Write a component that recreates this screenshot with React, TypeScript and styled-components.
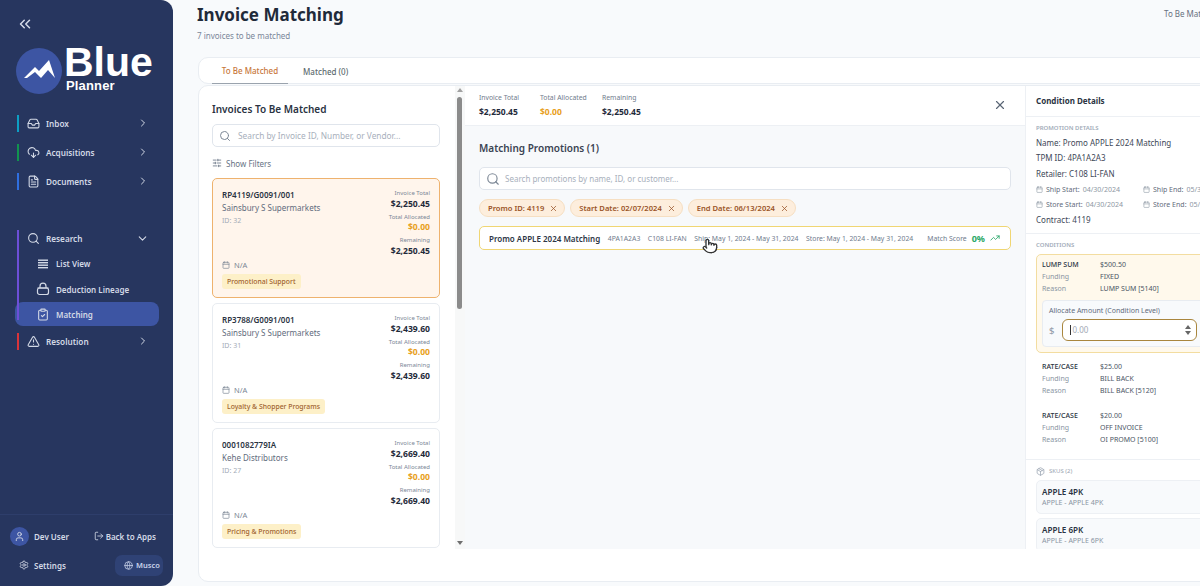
import React from 'react';
import styled, { createGlobalStyle } from 'styled-components';
import {
  Calendar,
  ChevronDown,
  ChevronRight,
  ChevronsLeft,
  ClipboardCheck,
  CloudDownload,
  FileText,
  Globe,
  Inbox,
  LogOut,
  Package,
  Pointer,
  Search,
  Settings,
  SlidersHorizontal,
  TrendingUp,
  TriangleAlert,
  User,
  X,
} from 'lucide-react';

const GlobalStyle = createGlobalStyle`
  html, body {
    margin: 0;
    padding: 0;
    width: 1200px;
    height: 586px;
    overflow: hidden;
    background: #f8fafc;
    font-family: "Noto Sans", "Open Sans", sans-serif;
  }
  * { box-sizing: border-box; }
`;

const invoices = [
  { no: 'RP4119/G0091/001', vendor: 'Sainsbury S Supermarkets', id: 32, total: '$2,250.45', tag: 'Promotional Support', active: true },
  { no: 'RP3788/G0091/001', vendor: 'Sainsbury S Supermarkets', id: 31, total: '$2,439.60', tag: 'Loyalty & Shopper Programs', active: false },
  { no: '0001082779IA', vendor: 'Kehe Distributors', id: 27, total: '$2,669.40', tag: 'Pricing & Promotions', active: false },
];

const App: React.FC = () => {
  return (
    <Page>
      <GlobalStyle />
      <Sidebar>
        <Collapse>
          <ChevronsLeft size={18} />
        </Collapse>
        <Logo>
          <LogoMark>
            <svg width="46" height="46" viewBox="0 0 46 46">
              <path d="M8 30 L19 19 L23 23 L33 12 L39 30 L32 22 L25 30 L19 24 L11 30 Z" fill="#fff" />
            </svg>
          </LogoMark>
          <LogoText>
            <LogoBig>Blue</LogoBig>
            <LogoSmall>Planner</LogoSmall>
          </LogoText>
        </Logo>
        <NavGroup>
          <NavRow>
            <Accent $color="#0d9fc4" />
            <Inbox size={13} />
            <NavLabel>Inbox</NavLabel>
            <ChevronRight size={12} />
          </NavRow>
          <NavRow>
            <Accent $color="#11934f" />
            <CloudDownload size={13} />
            <NavLabel>Acquisitions</NavLabel>
            <ChevronRight size={12} />
          </NavRow>
          <NavRow>
            <Accent $color="#2f6fe0" />
            <FileText size={13} />
            <NavLabel>Documents</NavLabel>
            <ChevronRight size={12} />
          </NavRow>
        </NavGroup>
        <ResearchGroup>
          <ResearchBar />
          <ResearchRow>
            <Search size={13} />
            <NavLabel>Research</NavLabel>
            <ChevronDown size={13} />
          </ResearchRow>
          <SubRow>
            <svg width="14" height="10" viewBox="0 0 14 10" fill="currentColor">
              <rect x="2" y="0.5" width="10" height="1.4" />
              <rect x="2" y="3" width="10" height="1.4" />
              <rect x="2" y="5.5" width="10" height="1.4" />
              <rect x="2" y="8" width="10" height="1.4" />
            </svg>
            <span>List View</span>
          </SubRow>
          <SubRow>
            <svg width="14" height="14" viewBox="0 0 14 14" fill="none" stroke="currentColor" strokeWidth="1.2">
              <path d="M4 6V4.2a3 3 0 0 1 6 0V6" />
              <path d="M1.5 6h11" />
              <rect x="1.5" y="6" width="11" height="6.5" rx="2" />
            </svg>
            <span>Deduction Lineage</span>
          </SubRow>
          <SubRow $active>
            <ClipboardCheck size={13} />
            <span>Matching</span>
          </SubRow>
        </ResearchGroup>
        <ResolutionRow>
          <Accent $color="#d9343a" />
          <TriangleAlert size={13} />
          <NavLabel>Resolution</NavLabel>
          <ChevronRight size={12} />
        </ResolutionRow>
        <SideFooter>
          <FooterRow>
            <UserBlock>
              <Avatar>
                <User size={11} />
              </Avatar>
              Dev User
            </UserBlock>
            <FooterLink>
              <LogOut size={10} />
              Back to Apps
            </FooterLink>
          </FooterRow>
          <FooterRow>
            <SettingsBlock>
              <Settings size={10} />
              Settings
            </SettingsBlock>
            <OrgPill>
              <Globe size={9} />
              Musco
            </OrgPill>
          </FooterRow>
        </SideFooter>
      </Sidebar>

      <Main>
        <Header>
          <div>
            <Title>Invoice Matching</Title>
            <Subtitle>7 invoices to be matched</Subtitle>
          </div>
          <Crumb>To Be Matched</Crumb>
        </Header>

        <Tabs>
          <Tab $active>To Be Matched</Tab>
          <Tab>Matched (0)</Tab>
        </Tabs>

        <Board>
          <Columns>
            <ListColumn>
              <ListBody>
                <ListTitle>Invoices To Be Matched</ListTitle>
                <SearchBox>
                  <Search size={12} />
                  <span>Search by Invoice ID, Number, or Vendor...</span>
                </SearchBox>
                <FilterToggle>
                  <SlidersHorizontal size={10} />
                  Show Filters
                </FilterToggle>
                <CardStack>
                  {invoices.map((inv) => (
                    <InvoiceCard key={inv.no} $active={inv.active}>
                      <CardTop>
                        <div>
                          <InvoiceNo>{inv.no}</InvoiceNo>
                          <Vendor>{inv.vendor}</Vendor>
                          <InvoiceId>ID: {inv.id}</InvoiceId>
                        </div>
                        <Amounts>
                          <AmountLabel>Invoice Total</AmountLabel>
                          <AmountValue>{inv.total}</AmountValue>
                          <AmountLabel>Total Allocated</AmountLabel>
                          <AmountValue $orange>$0.00</AmountValue>
                          <AmountLabel>Remaining</AmountLabel>
                          <AmountValue>{inv.total}</AmountValue>
                        </Amounts>
                      </CardTop>
                      <DateLine>
                        <Calendar size={8} />
                        N/A
                      </DateLine>
                      <Tag>{inv.tag}</Tag>
                    </InvoiceCard>
                  ))}
                </CardStack>
              </ListBody>
              <Scrollbar>
                <ArrowUp />
                <Thumb />
                <ArrowDown />
              </Scrollbar>
            </ListColumn>

            <MiddleColumn>
              <Totals>
                <TotalsGroup>
                  <div>
                    <TotalLabel>Invoice Total</TotalLabel>
                    <TotalValue>$2,250.45</TotalValue>
                  </div>
                  <div>
                    <TotalLabel>Total Allocated</TotalLabel>
                    <TotalValue $orange>$0.00</TotalValue>
                  </div>
                  <div>
                    <TotalLabel>Remaining</TotalLabel>
                    <TotalValue>$2,250.45</TotalValue>
                  </div>
                </TotalsGroup>
                <CloseButton>
                  <X size={14} />
                </CloseButton>
              </Totals>
              <MiddleBody>
                <SectionTitle>Matching Promotions (1)</SectionTitle>
                <PromoSearch>
                  <Search size={14} />
                  <span>Search promotions by name, ID, or customer...</span>
                </PromoSearch>
                <Chips>
                  <Chip>
                    Promo ID: 4119 <X size={9} />
                  </Chip>
                  <Chip>
                    Start Date: 02/07/2024 <X size={9} />
                  </Chip>
                  <Chip>
                    End Date: 06/13/2024 <X size={9} />
                  </Chip>
                </Chips>
                <PromoRow>
                  <PromoName>Promo APPLE 2024 Matching</PromoName>
                  <PromoMeta>4PA1A2A3</PromoMeta>
                  <PromoMeta>C108 LI-FAN</PromoMeta>
                  <PromoMeta>Ship: May 1, 2024 - May 31, 2024</PromoMeta>
                  <PromoMeta>Store: May 1, 2024 - May 31, 2024</PromoMeta>
                  <Score>
                    <PromoMeta>Match Score</PromoMeta>
                    <ScoreValue>0%</ScoreValue>
                    <TrendingUp size={10} color="#22a565" />
                  </Score>
                  <Cursor>
                    <Pointer size={16} fill="#fff" />
                  </Cursor>
                </PromoRow>
              </MiddleBody>
            </MiddleColumn>

            <DetailColumn>
              <DetailHeader>Condition Details</DetailHeader>
              <DetailSection>
                <Eyebrow>PROMOTION DETAILS</Eyebrow>
                <DetailLine>Name: Promo APPLE 2024 Matching</DetailLine>
                <DetailLine>TPM ID: 4PA1A2A3</DetailLine>
                <DetailLine>Retailer: C108 LI-FAN</DetailLine>
                <DatesGrid>
                  <DateCell>
                    <Calendar size={7} />
                    <b>Ship Start:</b> 04/30/2024
                  </DateCell>
                  <DateCell>
                    <Calendar size={7} />
                    <b>Ship End:</b> 05/31/2024
                  </DateCell>
                  <DateCell>
                    <Calendar size={7} />
                    <b>Store Start:</b> 04/30/2024
                  </DateCell>
                  <DateCell>
                    <Calendar size={7} />
                    <b>Store End:</b> 05/31/2024
                  </DateCell>
                </DatesGrid>
                <DetailLine>Contract: 4119</DetailLine>
              </DetailSection>
              <ConditionSection>
                <Eyebrow>CONDITIONS</Eyebrow>
                <ConditionCard $active>
                  <TermGrid>
                    <TermHead>LUMP SUM</TermHead>
                    <TermValue>$500.50</TermValue>
                    <TermKey>Funding</TermKey>
                    <TermValue>FIXED</TermValue>
                    <TermKey>Reason</TermKey>
                    <TermValue>LUMP SUM [5140]</TermValue>
                  </TermGrid>
                  <AllocateBox>
                    <AllocateLabel>Allocate Amount (Condition Level)</AllocateLabel>
                    <AllocateRow>
                      <Dollar>$</Dollar>
                      <AmountInput>
                        <Placeholder>0.00</Placeholder>
                        <Stepper>
                          <StepUp />
                          <StepDown />
                        </Stepper>
                      </AmountInput>
                    </AllocateRow>
                  </AllocateBox>
                </ConditionCard>
                <ConditionCard>
                  <TermGrid>
                    <TermHead>RATE/CASE</TermHead>
                    <TermValue>$25.00</TermValue>
                    <TermKey>Funding</TermKey>
                    <TermValue>BILL BACK</TermValue>
                    <TermKey>Reason</TermKey>
                    <TermValue>BILL BACK [5120]</TermValue>
                  </TermGrid>
                </ConditionCard>
                <ConditionCard>
                  <TermGrid>
                    <TermHead>RATE/CASE</TermHead>
                    <TermValue>$20.00</TermValue>
                    <TermKey>Funding</TermKey>
                    <TermValue>OFF INVOICE</TermValue>
                    <TermKey>Reason</TermKey>
                    <TermValue>OI PROMO [5100]</TermValue>
                  </TermGrid>
                </ConditionCard>
              </ConditionSection>
              <SkuSection>
                <SkuLabel>
                  <Package size={9} />
                  SKUS (2)
                </SkuLabel>
                <SkuCard>
                  <SkuName>APPLE 4PK</SkuName>
                  <SkuSub>APPLE - APPLE 4PK</SkuSub>
                </SkuCard>
                <SkuCard>
                  <SkuName>APPLE 6PK</SkuName>
                  <SkuSub>APPLE - APPLE 6PK</SkuSub>
                </SkuCard>
              </SkuSection>
            </DetailColumn>
          </Columns>
        </Board>
      </Main>
    </Page>
  );
};

export default App;

const Page = styled.div`
  display: flex;
  width: 1200px;
  height: 586px;
  overflow: hidden;
  background: #f8fafc;
`;

/* sidebar */
const Sidebar = styled.aside`
  display: flex;
  flex: none;
  flex-direction: column;
  width: 173px;
  height: 586px;
  padding: 15px 0 0 17px;
  border-radius: 0 12px 12px 0;
  background: #27365f;
  color: #d3d9e6;
`;

const Collapse = styled.div`
  display: flex;
  height: 18px;
  margin-left: -1px;
  color: #d5dbe8;
`;

const Logo = styled.div`
  display: flex;
  align-items: flex-start;
  height: 67px;
  margin: 10px 0 0 -1px;
`;

const LogoMark = styled.div`
  display: flex;
  flex: none;
  width: 46px;
  height: 46px;
  margin-top: 5px;
  border-radius: 50%;
  background: #3d55a3;
`;

const LogoText = styled.div`
  display: flex;
  flex-direction: column;
  margin-left: 2px;
  color: #fff;
  font-family: "Liberation Sans", Arial, sans-serif;
`;

const LogoBig = styled.div`
  margin-top: 1px;
  font-size: 41px;
  font-weight: 700;
  line-height: 36px;
`;

const LogoSmall = styled.div`
  margin: -1px 0 0 2px;
  font-size: 13px;
  font-weight: 700;
  line-height: 14px;
  letter-spacing: 0.15px;
`;

const NavGroup = styled.div`
  display: flex;
  flex-direction: column;
  gap: 5px;
  margin-top: 1px;
`;

const NavRow = styled.div`
  display: flex;
  align-items: center;
  width: 132px;
  height: 24px;
  svg:first-of-type {
    margin-left: 8px;
  }
`;

const ResolutionRow = styled(NavRow)`
  margin-top: 3px;
`;

const Accent = styled.span<{ $color: string }>`
  flex: none;
  width: 2px;
  height: 17px;
  background: ${(p) => p.$color};
`;

const NavLabel = styled.span`
  flex: 1;
  margin-left: 6px;
  font-size: 8.2px;
  font-weight: 600;
`;

const ResearchGroup = styled.div`
  position: relative;
  display: flex;
  flex-direction: column;
  width: 144px;
  margin: 36px 0 0 -2px;
`;

const ResearchBar = styled.span`
  position: absolute;
  top: 1px;
  left: 2px;
  z-index: 1;
  width: 2px;
  height: 90px;
  background: #6d4fd8;
`;

const ResearchRow = styled.div`
  display: flex;
  align-items: center;
  width: 134px;
  height: 18px;
  margin-bottom: 4px;
  padding-left: 12px;
`;

const SubRow = styled.div<{ $active?: boolean }>`
  display: flex;
  align-items: center;
  gap: 6px;
  height: ${(p) => (p.$active ? '24px' : '25.5px')};
  padding-left: 21px;
  border-radius: 8px;
  background: ${(p) => (p.$active ? '#3d55a3' : 'transparent')};
  font-size: 8px;
  font-weight: 600;
  svg {
    flex: none;
    width: 14px;
  }
`;

const SideFooter = styled.div`
  display: flex;
  flex-direction: column;
  gap: 9px;
  margin: auto 0 0 -17px;
  padding: 11px 10px;
  border-top: 1px solid #2e3e6b;
`;

const FooterRow = styled.div`
  display: flex;
  align-items: center;
  justify-content: space-between;
  height: 20px;
  font-size: 8px;
  font-weight: 600;
`;

const UserBlock = styled.div`
  display: flex;
  align-items: center;
  gap: 5px;
`;

const Avatar = styled.span`
  display: flex;
  align-items: center;
  justify-content: center;
  width: 19px;
  height: 19px;
  border-radius: 50%;
  background: #3d55a3;
`;

const FooterLink = styled.div`
  display: flex;
  align-items: center;
  gap: 2px;
  margin-right: 7px;
`;

const SettingsBlock = styled.div`
  display: flex;
  align-items: center;
  gap: 5px;
  margin-left: 9px;
`;

const OrgPill = styled.div`
  display: flex;
  align-items: center;
  gap: 3px;
  width: 48px;
  height: 21px;
  padding-left: 9px;
  border-radius: 7px;
  background: #2f4275;
  color: #c9d3ea;
  font-size: 7.5px;
`;

/* main area */
const Main = styled.main`
  display: flex;
  flex: none;
  flex-direction: column;
  width: 1040px;
  padding-left: 25px;
`;

const Header = styled.header`
  display: grid;
  grid-template-columns: 967px auto;
  height: 57px;
  margin-left: -1px;
  padding-top: 3px;
`;

const Title = styled.h1`
  margin: 0;
  color: #1f2a3a;
  font-size: 17px;
  font-weight: 700;
  line-height: 24px;
`;

const Subtitle = styled.div`
  margin-top: 3px;
  color: #7a8699;
  font-size: 8px;
`;

const Crumb = styled.div`
  margin-top: 5px;
  color: #67707e;
  font-size: 8px;
  white-space: nowrap;
`;

const Tabs = styled.nav`
  display: flex;
  gap: 15px;
  height: 27px;
  margin-right: -40px;
  padding-left: 13px;
  border: 1px solid #e9edf2;
  border-radius: 10px 0 0 10px;
  background: #fff;
`;

const Tab = styled.div<{ $active?: boolean }>`
  display: flex;
  align-items: center;
  justify-content: center;
  min-width: ${(p) => (p.$active ? '76px' : '45px')};
  height: 26px;
  border-bottom: ${(p) => (p.$active ? '1px solid #9aa3ad' : '0')};
  color: ${(p) => (p.$active ? '#c8783c' : '#5d6b6f')};
  font-size: 8px;
  font-weight: 500;
`;

const Board = styled.section`
  height: 497px;
  margin: 1px -40px 0 0;
  border: 1px solid #e9edf2;
  border-radius: 10px 0 0 10px;
  background: #fff;
`;

const Columns = styled.div`
  display: flex;
  height: 463px;
  overflow: hidden;
`;

const ListColumn = styled.div`
  display: flex;
  flex: none;
  width: 266px;
`;

const ListBody = styled.div`
  flex: 1;
  padding: 15px 15px 0 13px;
  overflow: hidden;
`;

const ListTitle = styled.h2`
  margin: 0;
  color: #2a3342;
  font-size: 10px;
  font-weight: 600;
  line-height: 16px;
`;

const SearchBox = styled.div`
  display: flex;
  align-items: center;
  gap: 7px;
  height: 23px;
  margin-top: 7px;
  padding-left: 6px;
  border: 1px solid #e0e5ec;
  border-radius: 5px;
  font-size: 8.3px;
  svg {
    color: #7d8896;
  }
  span {
    color: #a8b0bc;
  }
`;

const FilterToggle = styled.div`
  display: flex;
  align-items: center;
  gap: 4px;
  height: 12px;
  margin-top: 10px;
  color: #687384;
  font-size: 8px;
`;

const CardStack = styled.div`
  display: flex;
  flex-direction: column;
  gap: 5px;
  margin-top: 9px;
`;

const InvoiceCard = styled.article<{ $active: boolean }>`
  display: flex;
  flex-direction: column;
  height: 120px;
  padding: 8px 9px 0 9px;
  border: 1px solid ${(p) => (p.$active ? '#eeb26e' : '#e8ecf1')};
  border-radius: 5px;
  background: ${(p) => (p.$active ? '#fff5ec' : '#fff')};
`;

const CardTop = styled.div`
  display: flex;
  justify-content: space-between;
  height: 72px;
`;

const InvoiceNo = styled.div`
  margin-top: 2px;
  color: #2a3342;
  font-size: 8px;
  font-weight: 600;
  line-height: 12px;
`;

const Vendor = styled.div`
  color: #5f6b7c;
  font-size: 8px;
  line-height: 13px;
`;

const InvoiceId = styled.div`
  margin-top: 1px;
  color: #a3abb7;
  font-size: 7px;
  line-height: 12px;
`;

const Amounts = styled.div`
  display: flex;
  flex-direction: column;
  align-items: flex-end;
  padding-top: 1px;
`;

const AmountLabel = styled.div`
  color: #7b8797;
  font-size: 6px;
  line-height: 11px;
`;

const AmountValue = styled.div<{ $orange?: boolean }>`
  margin: -1.5px 0 1.5px;
  color: ${(p) => (p.$orange ? '#e8a020' : '#1f2a3a')};
  font-size: 8.6px;
  font-weight: 700;
  line-height: 12.5px;
`;

const DateLine = styled.div`
  display: flex;
  align-items: center;
  gap: 4px;
  color: #7a8594;
  font-size: 7.5px;
  line-height: 12px;
`;

const Tag = styled.span`
  align-self: flex-start;
  margin-top: 3px;
  padding: 0 5px;
  border-radius: 3px;
  background: #fdf0c8;
  color: #a0622e;
  font-size: 6.85px;
  font-weight: 500;
  line-height: 15px;
`;

const Scrollbar = styled.div`
  display: flex;
  flex: none;
  flex-direction: column;
  align-items: center;
  width: 10px;
  padding: 2px 1px 0 0;
  background: #f7f8f8;
`;

const ArrowUp = styled.span`
  flex: none;
  width: 0;
  height: 0;
  border-right: 3px solid transparent;
  border-bottom: 4px solid #a1a1a1;
  border-left: 3px solid transparent;
`;

const ArrowDown = styled.span`
  flex: none;
  width: 0;
  height: 0;
  margin-top: auto;
  margin-bottom: 4px;
  border-top: 4px solid #6f6f6f;
  border-right: 3px solid transparent;
  border-left: 3px solid transparent;
`;

const Thumb = styled.span`
  width: 5px;
  height: 212px;
  margin-top: 5px;
  border-radius: 3px;
  background: #8b8b8b;
`;

const MiddleColumn = styled.div`
  display: flex;
  flex: none;
  flex-direction: column;
  width: 561px;
  border-right: 1px solid #edf0f4;
  background: #f7f9fb;
`;

const Totals = styled.div`
  display: flex;
  align-items: center;
  justify-content: space-between;
  height: 40px;
  padding: 0 18px 0 14px;
  border-bottom: 1px solid #edf0f4;
  background: #fff;
`;

const TotalsGroup = styled.div`
  display: grid;
  grid-template-columns: 61px 62px auto;
`;

const TotalLabel = styled.div`
  margin-bottom: 2px;
  color: #6f7b8c;
  font-size: 6.8px;
  line-height: 11px;
`;

const TotalValue = styled.div<{ $orange?: boolean }>`
  color: ${(p) => (p.$orange ? '#e8a020' : '#1f2a3a')};
  font-size: 8.5px;
  font-weight: 700;
  line-height: 14px;
`;

const CloseButton = styled.div`
  display: flex;
  margin-top: -2px;
  color: #5a6575;
`;

const MiddleBody = styled.div`
  padding: 14px 14px 0 14px;
`;

const SectionTitle = styled.h2`
  margin: 0;
  color: #3a4352;
  font-size: 10px;
  font-weight: 600;
  line-height: 16px;
`;

const PromoSearch = styled(SearchBox)`
  gap: 5px;
  margin-top: 11px;
  background: #fff;
  font-size: 8px;
`;

const Chips = styled.div`
  display: flex;
  gap: 5px;
  margin-top: 9px;
`;

const Chip = styled.span`
  display: flex;
  align-items: center;
  gap: 5px;
  height: 18px;
  padding: 0 6px 0 8px;
  border: 1px solid #f6dfc2;
  border-radius: 9px;
  background: #fdeedd;
  color: #9a5428;
  font-size: 7.6px;
  font-weight: 600;
`;

const PromoRow = styled.div`
  position: relative;
  display: flex;
  align-items: center;
  gap: 7.5px;
  height: 24px;
  margin-top: 9px;
  padding: 0 10px 0 9px;
  border: 1px solid #f0d673;
  border-radius: 5px;
  background: #fff;
  white-space: nowrap;
`;

const PromoName = styled.span`
  color: #2d3645;
  font-size: 8px;
  font-weight: 600;
`;

const PromoMeta = styled.span`
  color: #6f7b8c;
  font-size: 6.85px;
`;

const Score = styled.div`
  display: flex;
  align-items: center;
  gap: 5px;
  margin-left: auto;
`;

const ScoreValue = styled.span`
  color: #2aa866;
  font-size: 9px;
  font-weight: 700;
`;

const Cursor = styled.span`
  position: absolute;
  top: 11px;
  left: 222px;
  display: flex;
  color: #333;
`;

const DetailColumn = styled.div`
  flex: none;
  width: 190px;
  overflow: hidden;
`;

const DetailHeader = styled.div`
  height: 31px;
  padding-left: 10px;
  border-bottom: 1px solid #edf0f4;
  color: #2a3342;
  font-size: 8px;
  font-weight: 700;
  line-height: 30px;
`;

const DetailSection = styled.div`
  height: 117px;
  padding: 6px 0 0 10px;
  border-bottom: 1px solid #edf0f4;
`;

const Eyebrow = styled.div`
  color: #a2acb9;
  font-size: 6px;
  font-weight: 600;
  line-height: 10px;
`;

const DetailLine = styled.div`
  margin-top: 3.5px;
  color: #3d4757;
  font-size: 8px;
  line-height: 12px;
`;

const DatesGrid = styled.div`
  display: grid;
  grid-template-columns: 107px 110px;
  row-gap: 3px;
  margin-top: 4px;
  margin-bottom: 1px;
`;

const DateCell = styled.div`
  display: flex;
  align-items: center;
  gap: 3px;
  color: #8d97a4;
  font-size: 7px;
  line-height: 12px;
  white-space: nowrap;
  b {
    color: #5f6b7c;
    font-weight: 400;
  }
`;

const ConditionSection = styled.div`
  height: 226px;
  padding: 6px 0 0 10px;
  border-bottom: 1px solid #edf0f4;
`;

const ConditionCard = styled.div<{ $active?: boolean }>`
  width: 176px;
  margin-top: ${(p) => (p.$active ? '4px' : '0')};
  margin-bottom: ${(p) => (p.$active ? '3px' : '2px')};
  padding: 4px 5px 5px 5px;
  border: 1px solid ${(p) => (p.$active ? '#f3dda0' : 'transparent')};
  border-radius: 5px;
  background: ${(p) => (p.$active ? '#fff9ec' : 'transparent')};
`;

const TermGrid = styled.div`
  display: grid;
  grid-template-columns: 58px auto;
  font-size: 7px;
  line-height: 12px;
`;

const TermHead = styled.span`
  color: #2a3342;
  font-weight: 500;
`;

const TermKey = styled.span`
  color: #8a95a3;
`;

const TermValue = styled.span`
  color: #4b5565;
`;

const AllocateBox = styled.div`
  margin-top: 5px;
  padding: 3px 6px 5px 6px;
  border: 1px solid #e8ecf1;
  border-radius: 4px;
  background: #f8fafc;
`;

const AllocateLabel = styled.div`
  color: #5f6b7c;
  font-size: 7px;
  line-height: 13px;
`;

const AllocateRow = styled.div`
  display: flex;
  align-items: center;
  gap: 8px;
  margin-top: 2px;
`;

const Dollar = styled.span`
  color: #8a95a3;
  font-size: 9.5px;
`;

const AmountInput = styled.div`
  display: flex;
  flex: none;
  align-items: center;
  justify-content: space-between;
  width: 135px;
  height: 22px;
  padding: 0 5px 0 7px;
  border: 1.5px solid #a9863e;
  border-radius: 6px;
  background: #fff;
`;

const Placeholder = styled.span`
  padding-left: 1px;
  border-left: 1px solid #333;
  color: #a2a9b4;
  font-size: 8px;
  line-height: 10px;
`;

const Stepper = styled.span`
  display: flex;
  flex-direction: column;
  gap: 2px;
`;

const StepUp = styled(ArrowUp)`
  border-bottom-color: #666;
`;

const StepDown = styled(ArrowDown)`
  margin: 0;
  border-top-color: #666;
`;

const SkuSection = styled.div`
  padding: 6px 0 0 10px;
`;

const SkuLabel = styled.div`
  display: flex;
  align-items: center;
  gap: 4px;
  margin-bottom: 1px;
  color: #9aa4b1;
  font-size: 6px;
  line-height: 10px;
`;

const SkuCard = styled.div`
  width: 176px;
  height: 34px;
  margin-top: 4px;
  padding: 5px;
  border: 1px solid #edf0f4;
  border-radius: 5px;
  background: #f8fafc;
`;

const SkuName = styled.div`
  color: #2a3342;
  font-size: 8.1px;
  font-weight: 600;
  line-height: 12px;
`;

const SkuSub = styled.div`
  color: #8a95a3;
  font-size: 7px;
  line-height: 10px;
`;
